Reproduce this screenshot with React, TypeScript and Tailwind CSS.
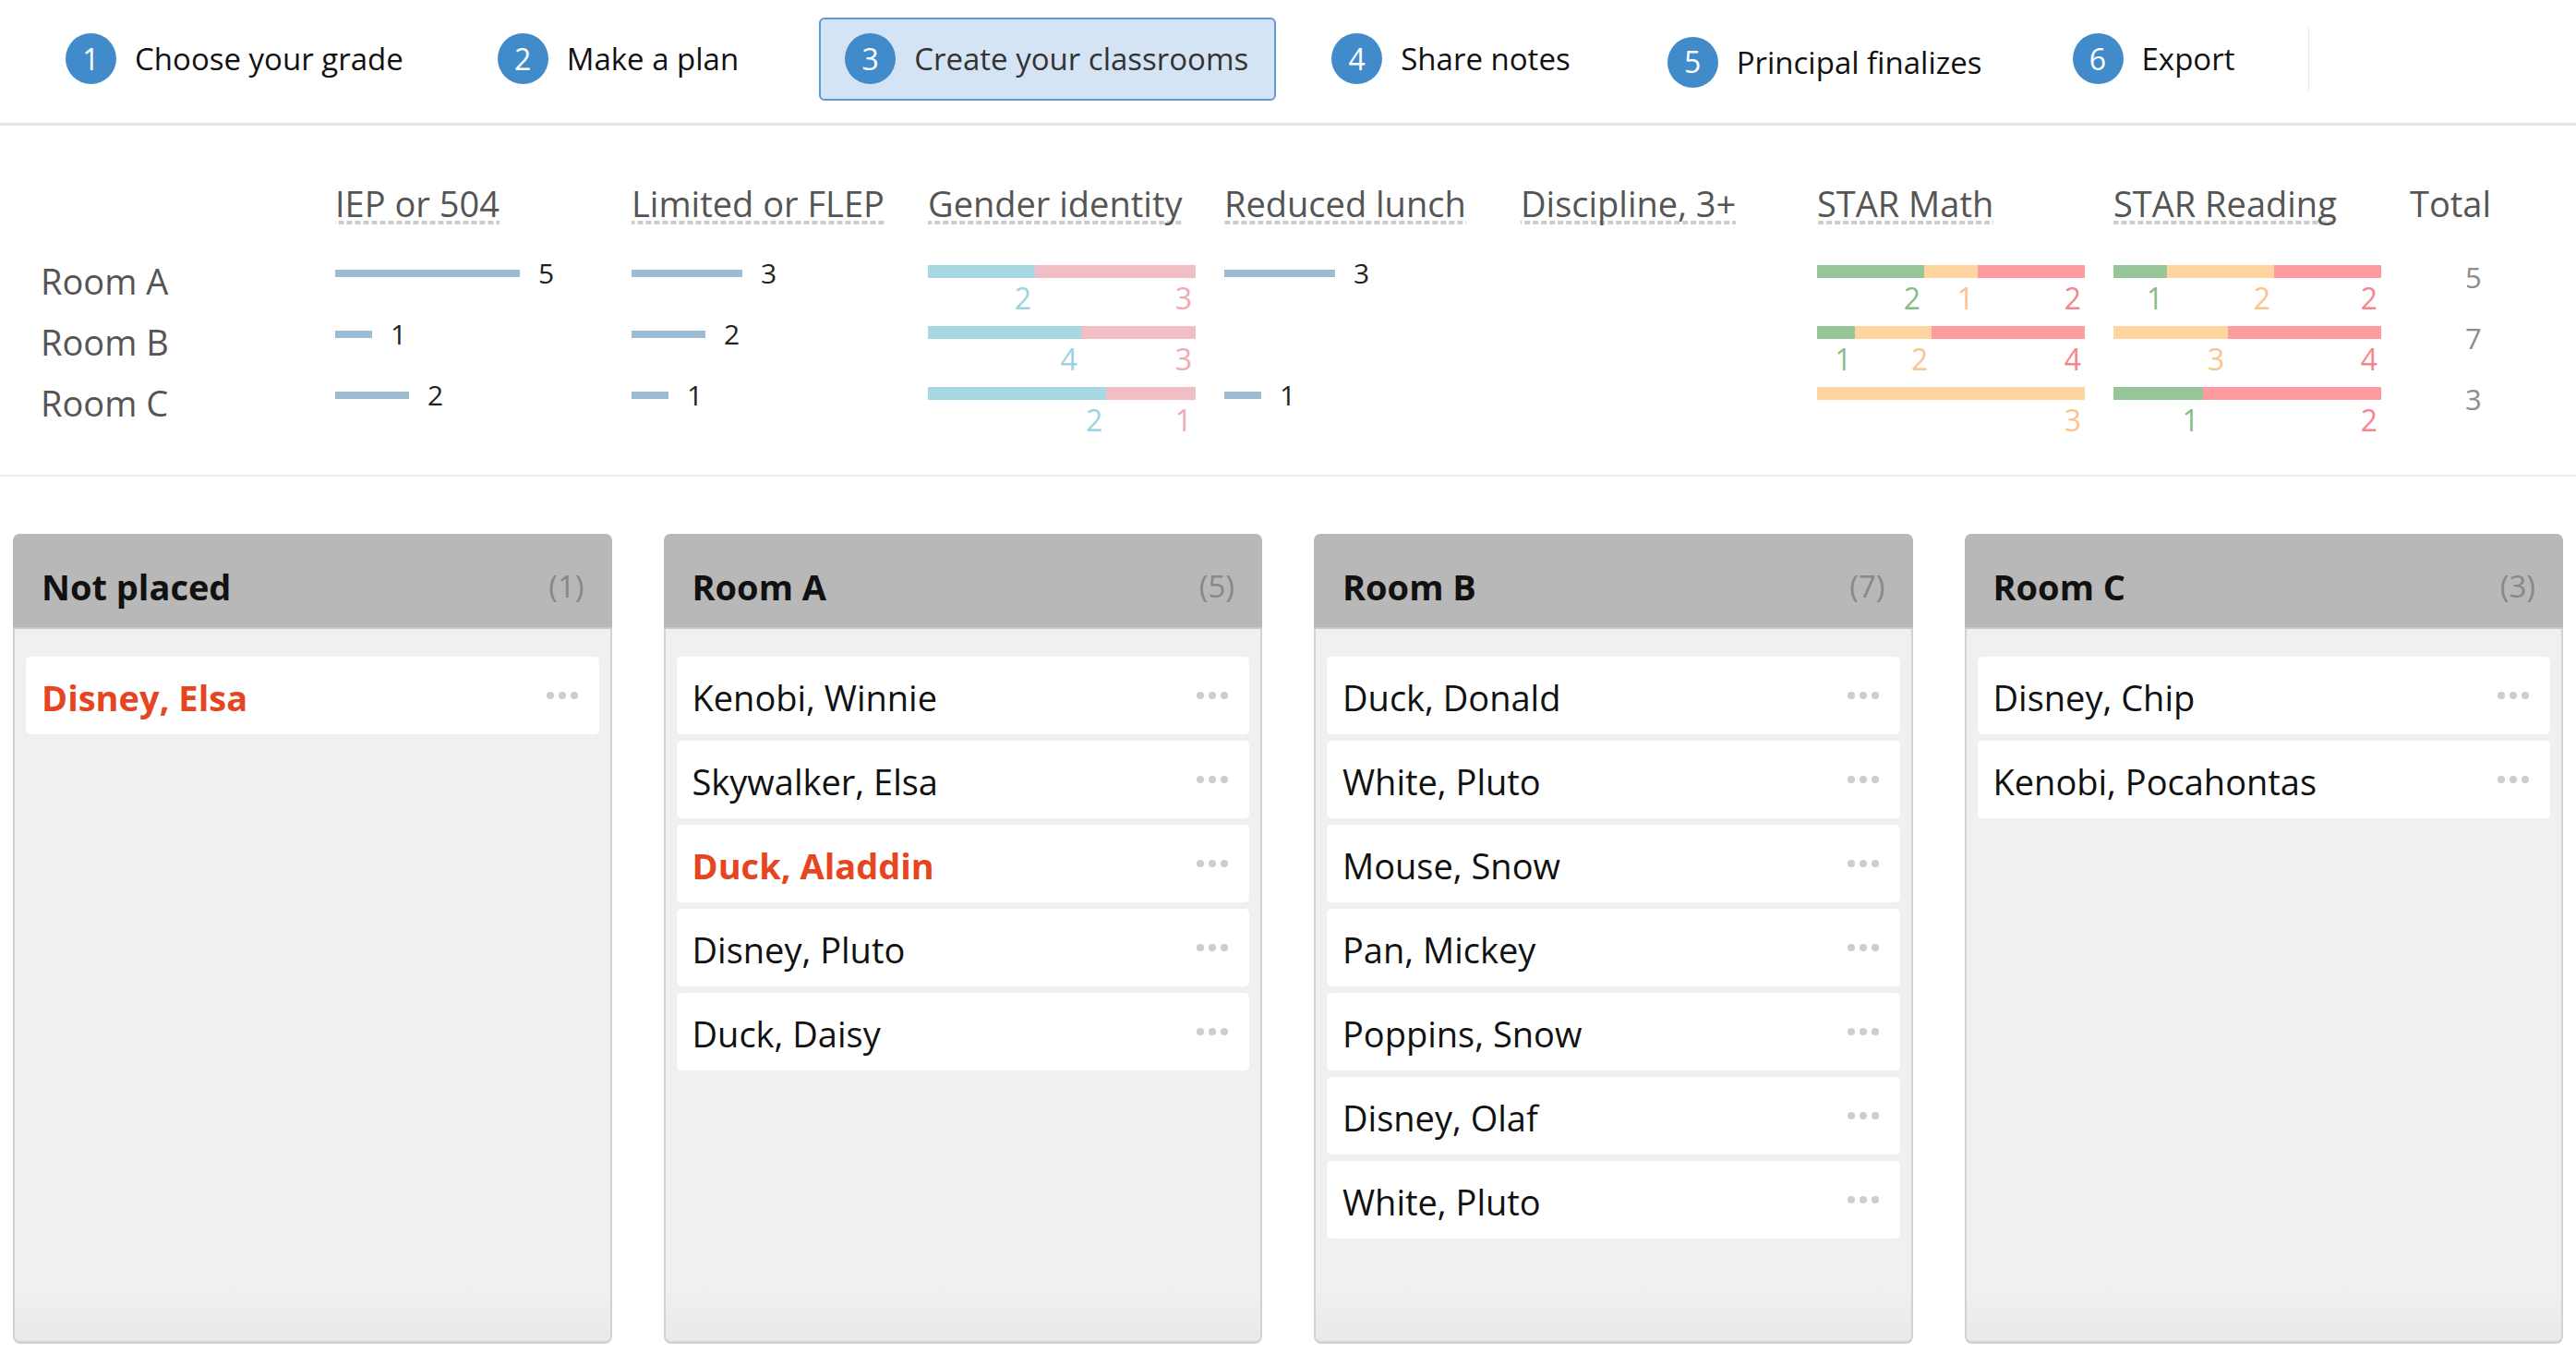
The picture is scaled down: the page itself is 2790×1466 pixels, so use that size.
import React from 'react';

// Passos do assistente no topo
const steps = [
	{ n: 1, label: 'Choose your grade', wrap: 'ml-[71px]' },
	{ n: 2, label: 'Make a plan', wrap: 'ml-[102px]' },
	{ n: 3, label: 'Create your classrooms', wrap: 'ml-[87px]', active: true },
	{ n: 4, label: 'Share notes', wrap: 'ml-[60px]' },
	{ n: 5, label: 'Principal finalizes', wrap: 'ml-[105px] mt-[7px]' },
	{ n: 6, label: 'Export', wrap: 'ml-[98px]' },
];

const rooms = ['Room A', 'Room B', 'Room C'];
const iep = [5, 1, 2];
const flep = [3, 2, 1];
const lunch = [3, 0, 1];
const gender = [[2, 3], [4, 3], [2, 1]];
const math = [[2, 1, 2], [1, 2, 4], [0, 3, 0]];
const reading = [[1, 2, 2], [0, 3, 4], [1, 0, 2]];
const totals = [5, 7, 3];

const genderColors = [
	{ bar: 'bg-[#a9d8e5]', text: 'text-[#9dd2e2]' },
	{ bar: 'bg-[#f2bec6]', text: 'text-[#f0aab6]' },
];
const starColors = [
	{ bar: 'bg-[#97c798]', text: 'text-[#86bd89]' },
	{ bar: 'bg-[#fed49f]', text: 'text-[#fbc48c]' },
	{ bar: 'bg-[#fe9b9e]', text: 'text-[#f5868c]' },
];

const columns = [
	{ title: 'Not placed', count: 1, students: [{ name: 'Disney, Elsa', flag: true }] },
	{
		title: 'Room A',
		count: 5,
		students: [
			{ name: 'Kenobi, Winnie' },
			{ name: 'Skywalker, Elsa' },
			{ name: 'Duck, Aladdin', flag: true },
			{ name: 'Disney, Pluto' },
			{ name: 'Duck, Daisy' },
		],
	},
	{
		title: 'Room B',
		count: 7,
		students: [
			{ name: 'Duck, Donald' },
			{ name: 'White, Pluto' },
			{ name: 'Mouse, Snow' },
			{ name: 'Pan, Mickey' },
			{ name: 'Poppins, Snow' },
			{ name: 'Disney, Olaf' },
			{ name: 'White, Pluto' },
		],
	},
	{ title: 'Room C', count: 3, students: [{ name: 'Disney, Chip' }, { name: 'Kenobi, Pocahontas' }] },
];

const StepItem: React.FC<{ n: number; label: string; wrap: string; active?: boolean }> = ({ n, label, wrap, active }) => {
	const inner = (
		<>
			<span className="flex h-[55px] w-[55px] shrink-0 items-center justify-center rounded-full bg-[#428bca] text-[32px] leading-none text-white">
				{n}
			</span>
			<span className={`text-[33px] leading-none ${active ? 'text-[#333]' : 'text-[#111]'}`}>{label}</span>
		</>
	);
	if (active) {
		return (
			<div className={`${wrap} flex h-[90px] items-center gap-[20px] rounded-[6px] border-2 border-[#5d9ad6] bg-[#d5e4f4] pl-[26px] pr-[28px]`}>
				{inner}
			</div>
		);
	}
	return <div className={`${wrap} flex items-center gap-[20px]`}>{inner}</div>;
};

// Cabeçalho com sublinhado pontilhado
const StatHeader: React.FC<{ label: string; dotted?: boolean }> = ({ label, dotted = true }) => (
	<div className="flex">
		<span
			className={`text-[38px] leading-[38px] text-[#555] ${
				dotted ? 'bg-[linear-gradient(to_right,#cdcdcd_65%,transparent_65%)] bg-[length:9px_4px] bg-bottom bg-repeat-x pb-[4px]' : ''
			}`}
		>
			{label}
		</span>
	</div>
);

// Barra simples; célula vazia quando o valor é zero para manter a grade
const SimpleBar: React.FC<{ value: number }> = ({ value }) => (
	<div className="mt-[2px] flex h-[28px] items-center">
		{value > 0 && (
			<>
				<div className="h-[8px] bg-[#9ebcd1]" style={{ width: value * 40 }} />
				<span className="ml-[20px] text-[30px] leading-none text-[#222]">{value}</span>
			</>
		)}
	</div>
);

const StackedBar: React.FC<{ values: number[]; colors: { bar: string; text: string }[] }> = ({ values, colors }) => (
	<div className="mt-[7px] flex w-[290px]">
		{values.map((v, i) =>
			v > 0 ? (
				<div key={i} className="flex basis-0 flex-col" style={{ flexGrow: v }}>
					<div className={`h-[14px] ${colors[i].bar}`} />
					<span className={`mt-[6px] pr-[4px] text-right text-[32px] leading-[32px] ${colors[i].text}`}>{v}</span>
				</div>
			) : null,
		)}
	</div>
);

const Dots = () => (
	<div className="flex gap-[5px]">
		<span className="h-[8px] w-[8px] rounded-full bg-[#cdcdcd]" />
		<span className="h-[8px] w-[8px] rounded-full bg-[#cdcdcd]" />
		<span className="h-[8px] w-[8px] rounded-full bg-[#cdcdcd]" />
	</div>
);

const StudentCard: React.FC<{ name: string; flag?: boolean }> = ({ name, flag }) => (
	<div className="mb-[7px] flex h-[84px] items-center justify-between rounded-[5px] bg-white pl-[17px] pr-[23px]">
		<span className={`mt-[3px] text-[38px] leading-none ${flag ? 'font-bold text-[#e5461f]' : 'text-[#111]'}`}>{name}</span>
		<Dots />
	</div>
);

export default function App() {
	return (
		<div className="min-h-screen bg-white font-['Open_Sans','Liberation_Sans',sans-serif]">
			{/* --- Passos --- */}
			<nav className="flex h-[136px] items-center border-b-[3px] border-[#e4e4e4] pb-[6px]">
				{steps.map((s) => (
					<StepItem key={s.n} {...s} />
				))}
				<div className="ml-[80px] h-[70px] w-px bg-[#e3ece3]" />
			</nav>

			{/* --- Resumo por sala --- */}
			<section className="border-b-2 border-[#ececec] pb-[36px] pl-[44px] pt-[65px]">
				<div className="grid grid-cols-[319px_repeat(7,321px)_1fr] items-start">
					<div />
					<StatHeader label="IEP or 504" />
					<StatHeader label="Limited or FLEP" />
					<StatHeader label="Gender identity" />
					<StatHeader label="Reduced lunch" />
					<StatHeader label="Discipline, 3+" />
					<StatHeader label="STAR Math" />
					<StatHeader label="STAR Reading" />
					<StatHeader label="Total" dotted={false} />
				</div>
				<div className="mt-[37px]">
					{rooms.map((room, r) => (
						<div key={room} className="grid h-[66px] grid-cols-[319px_repeat(7,321px)_1fr] items-start">
							<span className="text-[38px] leading-[48px] text-[#555]">{room}</span>
							<SimpleBar value={iep[r]} />
							<SimpleBar value={flep[r]} />
							<StackedBar values={gender[r]} colors={genderColors} />
							<SimpleBar value={lunch[r]} />
							<div />
							<StackedBar values={math[r]} colors={starColors} />
							<StackedBar values={reading[r]} colors={starColors} />
							<span className="mt-[5px] pl-[60px] text-[31px] leading-[31px] text-[#8c8c8c]">{totals[r]}</span>
						</div>
					))}
				</div>
			</section>

			{/* --- Colunas das salas --- */}
			<section className="grid grid-cols-4 gap-[56px] px-[14px] pt-[62px]">
				{columns.map((col) => (
					<div key={col.title} className="flex h-[877px] flex-col">
						<div className="flex h-[103px] shrink-0 items-center justify-between rounded-t-[7px] border-b-2 border-[#c9c9c9] bg-[#b8b8b8] pl-[31px] pr-[30px] pt-[12px]">
							<span className="text-[38px] font-bold leading-none text-[#111]">{col.title}</span>
							<span className="text-[33px] leading-none text-[#888]">({col.count})</span>
						</div>
						<div className="flex flex-1 flex-col rounded-b-[8px] border-x-2 border-b-[3px] border-[#d2d2d2] bg-[#f0f0f0]">
							<div className="flex-1 px-[12px] pt-[30px]">
								{col.students.map((s, i) => (
									<StudentCard key={i} {...s} />
								))}
							</div>
							<div className="h-[60px] rounded-b-[8px] bg-[linear-gradient(to_bottom,#f0f0f0,#e9e9e9)]" />
						</div>
					</div>
				))}
			</section>
		</div>
	);
}
